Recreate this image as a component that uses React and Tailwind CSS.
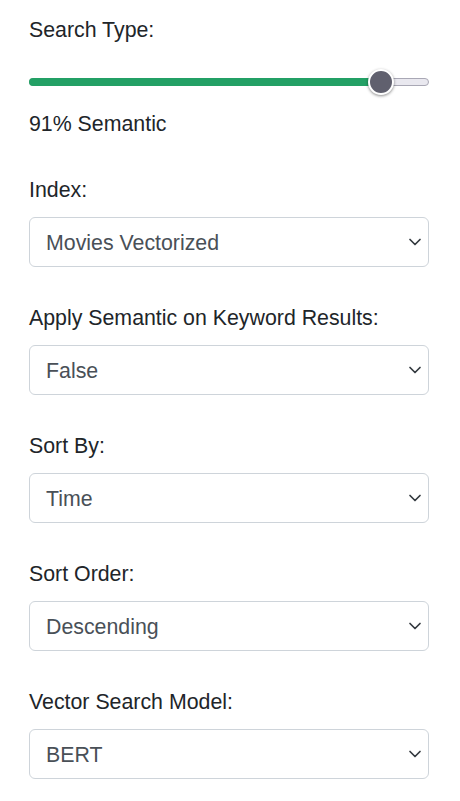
import React from "react";

function Chevron() {
  return (
    <svg width="14" height="10" viewBox="0 0 14 10" className="shrink-0">
      <path d="M2 2.5l5 5 5-5" fill="none" stroke="#343a40" strokeWidth="1.7" strokeLinecap="round" strokeLinejoin="round" />
    </svg>
  );
}

function Field({ label, value }) {
  return (
    <div className="flex flex-col">
      <div className="h-[30px] leading-[30px] text-[#212529]">{label}</div>
      <div className="mt-3 h-[50px] w-[400px] rounded-[6px] border border-[#ced4da] bg-white pl-4 pr-[6px] flex items-center justify-between">
        <span className="pt-[3px] text-[#495057]">{value}</span>
        <Chevron />
      </div>
    </div>
  );
}

export default function App() {
  const pct = 91;
  return (
    <div
      className="w-[460px] min-h-[801px] bg-white pl-[29px] pt-[15px] text-[21.33px]"
      style={{ fontFamily: '"Liberation Sans", Arial, sans-serif' }}
    >
      <div className="h-[30px] leading-[30px] text-[#212529]">Search Type:</div>
      <div className="relative mt-[24px] h-[26px] w-[400px] flex items-center">
        <div className="h-[8px] w-full rounded-full border border-[#a9a8b5] bg-[#e9e8ef]" />
        <div className="absolute left-0 top-[9px] h-[8px] w-[354px] rounded-full bg-[#23a065]" />
        <div className="absolute left-[339px] top-0 h-[26px] w-[26px] rounded-full border-2 border-white bg-[#60606e] shadow-[0_1px_3px_rgba(0,0,0,0.45)]" />
      </div>
      <div className="mt-[14px] h-[30px] leading-[30px] text-[#212529]">{pct}% Semantic</div>
      <div className="mt-[36px] flex flex-col gap-[36px]">
        <Field label="Index:" value="Movies Vectorized" />
        <Field label="Apply Semantic on Keyword Results:" value="False" />
        <Field label="Sort By:" value="Time" />
        <Field label="Sort Order:" value="Descending" />
        <Field label="Vector Search Model:" value="BERT" />
      </div>
    </div>
  );
}
